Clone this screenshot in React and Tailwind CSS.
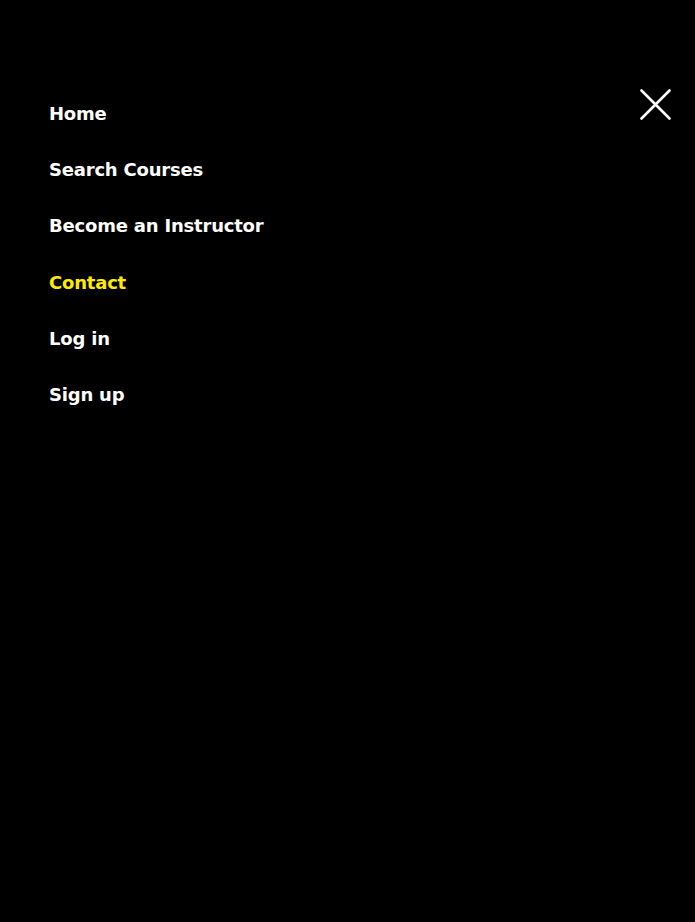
const links = [
  { label: "Home" },
  { label: "Search Courses" },
  { label: "Become an Instructor" },
  { label: "Contact", active: true },
  { label: "Log in" },
  { label: "Sign up" },
];

export default function App() {
  return (
    <div className="min-h-[922px] w-full bg-black font-['DejaVu_Sans',sans-serif] relative">
      {/* close button */}
      <button className="absolute right-[24px] top-[89px] text-white">
        <svg width="31" height="31" viewBox="0 0 31 31" fill="none" stroke="currentColor" strokeWidth="2.6" strokeLinecap="round">
          <path d="M1.5 1.5 L29.5 29.5 M29.5 1.5 L1.5 29.5" />
        </svg>
      </button>

      <nav className="flex flex-col pt-[85px] pl-[49px]">
        {links.map((l) => (
          <a
            key={l.label}
            href="#"
            className={`h-[56.3px] flex items-center text-[18px] font-bold tracking-[-0.2px] ${
              l.active ? "text-[#ffeb00]" : "text-white"
            }`}
          >
            {l.label}
          </a>
        ))}
      </nav>
    </div>
  );
}
